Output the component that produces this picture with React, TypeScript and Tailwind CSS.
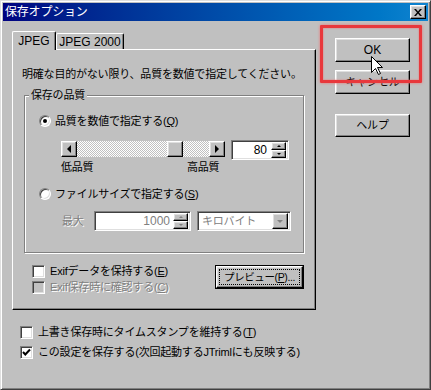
import React from 'react'

const raised =
  'border border-t-white border-l-white border-r-black border-b-black shadow-[inset_-1px_-1px_#808080,inset_1px_1px_#dfdfdf]'
const sunken =
  'border border-t-[#808080] border-l-[#808080] border-r-white border-b-white shadow-[inset_1px_1px_#404040,inset_-1px_-1px_#dfdfdf]'
const dim = 'text-[#808080] [text-shadow:1px_1px_0_#fff]'

function Btn({ children, className = '' }: { children?: React.ReactNode; className?: string }) {
  return (
    <div className={`flex items-center justify-center bg-[#c0c0c0] ${raised} ${className}`}>{children}</div>
  )
}

function Radio({ checked }: { checked?: boolean }) {
  return (
    <div className="flex h-[12px] w-[12px] shrink-0 items-center justify-center rounded-full border border-t-[#808080] border-l-[#808080] border-r-white border-b-white bg-white shadow-[inset_1px_1px_#404040,inset_-1px_-1px_#dfdfdf]">
      {checked && <div className="h-[4px] w-[4px] rounded-full bg-black" />}
    </div>
  )
}

function Check({ checked, disabled }: { checked?: boolean; disabled?: boolean }) {
  return (
    <div
      className={`flex h-[13px] w-[13px] shrink-0 items-center justify-center ${sunken} ${disabled ? 'bg-[#c0c0c0]' : 'bg-white'}`}
    >
      {checked && (
        <svg width="9" height="9" viewBox="0 0 9 9">
          <polyline points="1,4 3.3,6.5 8,1.5" fill="none" stroke="black" strokeWidth="2" />
        </svg>
      )}
    </div>
  )
}

function Tri({ dir, color = 'black', size = 4 }: { dir: 'l' | 'r' | 'u' | 'd'; color?: string; size?: number }) {
  const s = size
  const pts =
    dir === 'l'
      ? `${s},0 ${s},${2 * s} 0,${s}`
      : dir === 'r'
        ? `0,0 0,${2 * s} ${s},${s}`
        : dir === 'u'
          ? `0,${s} ${2 * s},${s} ${s},0`
          : `0,0 ${2 * s},0 ${s},${s}`
  const w = dir === 'l' || dir === 'r' ? s : 2 * s
  const h = dir === 'l' || dir === 'r' ? 2 * s : s
  return (
    <svg width={w} height={h} viewBox={`0 0 ${w} ${h}`}>
      <polygon points={pts} fill={color} />
    </svg>
  )
}

function Spin({ disabled }: { disabled?: boolean }) {
  const c = disabled ? '#808080' : 'black'
  return (
    <div className="flex w-[15px] flex-col">
      <Btn className="h-[8px] w-[15px]">
        <Tri dir="u" size={2} color={c} />
      </Btn>
      <Btn className="h-[8px] w-[15px]">
        <Tri dir="d" size={2} color={c} />
      </Btn>
    </div>
  )
}

const trough = 'bg-[image:repeating-conic-gradient(#ffffff_0%_25%,#c0c0c0_0%_50%)] bg-[length:2px_2px]'

export default function App() {
  return (
    <div className="relative h-[390px] w-[431px] overflow-hidden border border-t-[#dfdfdf] border-l-[#dfdfdf] border-r-[#404040] border-b-[#404040] bg-[#c0c0c0] p-[2px] font-['Liberation_Sans','Noto_Sans_CJK_JP',sans-serif] text-[11px] tracking-[-0.2px] text-black shadow-[inset_1px_1px_#fff,inset_-1px_-1px_#808080]">
      {/* Title bar */}
      <div className="flex h-[18px] items-center justify-between bg-gradient-to-r from-[#000080] to-[#1084d0] pl-[2px] pr-[2px]">
        <span className="text-[12px] leading-[18px] text-white">保存オプション</span>
        <Btn className="h-[14px] w-[16px]">
          <svg width="8" height="7" viewBox="0 0 8 7">
            <path d="M0 0h2l2 2.5L6 0h2L5 3.5 8 7H6L4 4.5 2 7H0l3-3.5z" fill="black" />
          </svg>
        </Btn>
      </div>

      <div className="flex pl-[9px] pt-[10px]">
        {/* Tab control */}
        <div className="flex w-[304px] flex-col">
          <div className="flex h-[18px] items-end">
            <div className="relative z-10 -mb-[1px] flex h-[19px] w-[44px] items-start justify-center rounded-t-[2px] border-l border-t border-r border-l-white border-t-white border-r-black bg-[#c0c0c0] pt-[2px] text-[12px] leading-[14px] tracking-normal shadow-[inset_-1px_0_#808080]">
              JPEG
            </div>
            <div className="flex h-[16px] w-[68px] items-start justify-center rounded-t-[2px] border-l border-t border-r border-l-white border-t-white border-r-black bg-[#c0c0c0] pt-[1px] text-[12px] leading-[14px] tracking-normal shadow-[inset_-1px_0_#808080]">
              JPEG 2000
            </div>
          </div>

          <div className="flex h-[261px] flex-col border border-t-white border-l-white border-r-black border-b-black shadow-[inset_-1px_-1px_#808080]">
            <div className="ml-[9px] mt-[16px] h-[16px] leading-[16px]">
              明確な目的がない限り、品質を数値で指定してください。
            </div>

            {/* Group box */}
            <div className="relative ml-[11px] mt-[13px] h-[158px] w-[280px] shrink-0 border border-[#808080] shadow-[inset_1px_1px_#fff,1px_1px_#fff]">
              <span className="absolute -top-[8px] left-[4px] bg-[#c0c0c0] px-[2px] leading-[14px]">保存の品質</span>

              <div className="ml-[14px] mt-[17px] flex h-[16px] items-center gap-[4px]">
                <Radio checked />
                <span className="leading-[16px]">
                  品質を数値で指定する(<u>Q</u>)
                </span>
              </div>

              <div className="ml-[36px] mt-[11px] flex h-[20px] items-start gap-[6px]">
                <div className="mt-[1px] flex h-[16px] w-[164px]">
                  <Btn className="h-[16px] w-[16px]">
                    <Tri dir="l" size={4} />
                  </Btn>
                  <div className={`h-[16px] w-[90px] ${trough}`} />
                  <Btn className="h-[16px] w-[16px]" />
                  <div className={`h-[16px] flex-1 ${trough}`} />
                  <Btn className="h-[16px] w-[16px]">
                    <Tri dir="r" size={4} />
                  </Btn>
                </div>
                <div className={`flex h-[20px] w-[58px] items-center bg-white pl-[2px] pr-[2px] ${sunken}`}>
                  <span className="flex-1 pr-[4px] text-right text-[12px] leading-[16px] tracking-normal">80</span>
                  <Spin />
                </div>
              </div>

              <div className="ml-[36px] flex h-[14px] leading-[14px]">
                <span className="w-[126px]">低品質</span>
                <span>高品質</span>
              </div>

              <div className="ml-[14px] mt-[12px] flex h-[16px] items-center gap-[4px]">
                <Radio />
                <span className="leading-[16px]">
                  ファイルサイズで指定する(<u>S</u>)
                </span>
              </div>

              <div className="ml-[37px] mt-[9px] flex h-[20px] items-center">
                <span className={`w-[32px] leading-[16px] ${dim}`}>最大</span>
                <div className={`flex h-[20px] w-[97px] items-center bg-white pl-[2px] pr-[2px] ${sunken}`}>
                  <span className={`flex-1 pr-[3px] text-right text-[12px] leading-[16px] tracking-normal ${dim}`}>1000</span>
                  <Spin disabled />
                </div>
                <div className={`ml-[6px] flex h-[20px] w-[94px] items-center bg-white pl-[4px] pr-[2px] ${sunken}`}>
                  <span className={`flex-1 leading-[16px] ${dim}`}>キロバイト</span>
                  <Btn className="h-[16px] w-[16px]">
                    <Tri dir="d" size={3} color="#808080" />
                  </Btn>
                </div>
              </div>
            </div>

            <div className="ml-[19px] mt-[10px] flex w-[272px] items-start">
              <div className="flex flex-1 flex-col">
                <div className="flex h-[16px] items-center gap-[5px]">
                  <Check />
                  <span className="leading-[16px]">
                    Exifデータを保持する(<u>E</u>)
                  </span>
                </div>
                <div className="flex h-[16px] items-center gap-[5px]">
                  <Check disabled />
                  <span className={`leading-[16px] ${dim}`}>
                    Exif保存時に確認する(<u>C</u>)
                  </span>
                </div>
              </div>
              <div className="mt-[2px] h-[24px] w-[89px] border border-black">
                <Btn className="h-full w-full p-[2px]">
                  <span className="flex h-full flex-1 items-center justify-center whitespace-nowrap border border-dotted border-black text-[10.5px] leading-[14px] tracking-[-0.4px]">
                    プレビュー(<u>P</u>)...
                  </span>
                </Btn>
              </div>
            </div>
          </div>
        </div>

        {/* Right buttons */}
        <div className="ml-[19px] flex flex-col pt-[7px]">
          <Btn className="h-[24px] w-[75px] text-[12px] tracking-normal">OK</Btn>
          <Btn className="mt-[8px] h-[24px] w-[75px]">キャンセル</Btn>
          <Btn className="mt-[20px] h-[23px] w-[75px]">ヘルプ</Btn>
        </div>
      </div>

      {/* Bottom options */}
      <div className="ml-[17px] mt-[14px] flex flex-col gap-[4px]">
        <div className="flex h-[16px] items-center gap-[5px]">
          <Check />
          <span className="leading-[16px]">
            上書き保存時にタイムスタンプを維持する(<u>T</u>)
          </span>
        </div>
        <div className="flex h-[16px] items-center gap-[5px]">
          <Check checked />
          <span className="leading-[16px]">この設定を保存する(次回起動するJTrimlにも反映する)</span>
        </div>
      </div>

      {/* Red highlight */}
      <div className="absolute left-[319px] top-[24px] h-[58px] w-[102px] rounded-[1px] border-[3px] border-[#e8383c] shadow-[0_0_3px_#f07070,inset_0_0_2px_#f07070]" />

      {/* Cursor */}
      <svg className="absolute left-[370px] top-[55px]" width="13" height="20" viewBox="0 0 13 20">
        <path d="M0.5 0.5V16.5L4.5 12.5L7.5 18.5L9.5 17.5L6.5 11.5H11.5Z" fill="white" stroke="black" strokeWidth="1" />
      </svg>
    </div>
  )
}
